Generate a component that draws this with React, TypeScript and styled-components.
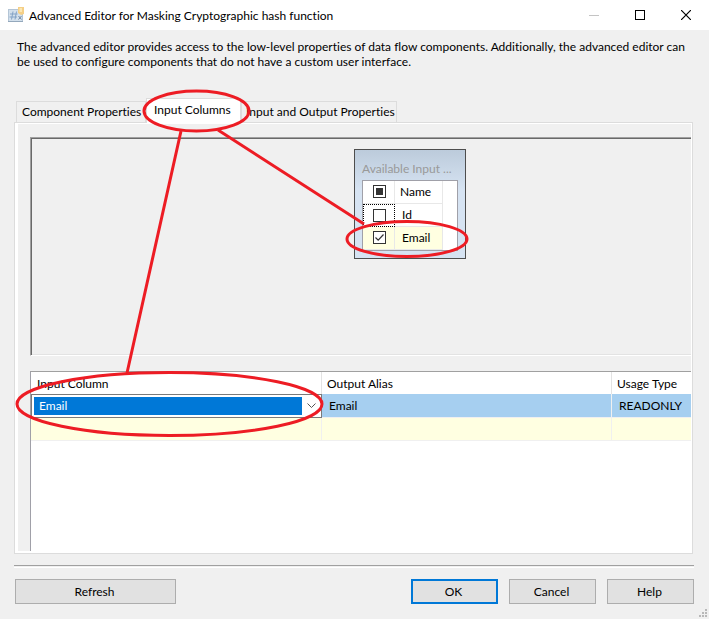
import React from "react";
import styled, { createGlobalStyle, css } from "styled-components";

const Global = createGlobalStyle`
  *, *::before, *::after { box-sizing: border-box; }
  html, body { margin: 0; padding: 0; }
  body, button, select, table {
    font-family: Lato, "Open Sans", sans-serif;
    font-size: 12px;
    line-height: 15px;
    font-variant-ligatures: none;
    color: #000;
  }
`;

const Dialog = styled.div`
  position: relative;
  display: flex;
  flex-direction: column;
  min-height: 100vh;
  background: #f0f0f0;
  overflow: hidden;
`;

const TitleBar = styled.header`
  display: flex;
  align-items: center;
  height: 30px;
  padding-left: 8px;
  background: #fff;
`;

const Title = styled.h1`
  flex: 1;
  margin: 0 0 0 5px;
  font-size: 12px;
  font-weight: 400;
  white-space: nowrap;
`;

const CaptionButton = styled.button`
  display: grid;
  place-items: center;
  width: 46px;
  height: 28px;
  padding: 0;
  border: 0;
  background: none;
`;

const Intro = styled.p`
  margin: 9px 0 0;
  padding: 0 14px 0 17px;
  min-height: 59px;
`;

const TabList = styled.div`
  display: flex;
  align-items: flex-end;
  height: 24px;
  padding-left: 16px;
`;

const Tab = styled.button<{ $active?: boolean }>`
  height: 21px;
  padding: 0 0 1px 5px;
  width: ${(p) => (p.$active ? "95px" : "130px")};
  border: 1px solid #dcdcdc;
  border-bottom: 0;
  background: #f0f0f0;
  white-space: nowrap;
  text-align: left;
  &:last-child { width: 156px; padding-left: 4px; }
  ${(p) =>
    p.$active &&
    css`
      z-index: 1;
      height: 25px;
      margin-bottom: -1px;
      padding: 0 0 3px 7px;
      background: #fff;
    `}
`;

const TabPanel = styled.section`
  flex: 1;
  display: flex;
  flex-direction: column;
  gap: 15px;
  margin: 0 16px 0 14px;
  padding: 14px 0 0 12px;
  border: 1px solid #dcdcdc;
  box-shadow: inset 3px 0 #fff, inset -1px 0 #fff, inset 0 1px #fff, inset 0 -2px #fff;
`;

const Canvas = styled.div`
  position: relative;
  height: 219px;
  margin: 0 1px 0 3px;
  border-top: 1px solid #a0a0a0;
  border-left: 1px solid #a0a0a0;
  border-bottom: 1px solid #fff;
  box-shadow: inset 1px 1px #696969, inset 0 -1px #e3e3e3;
`;

const InputWindow = styled.div`
  position: absolute;
  top: 11px;
  left: 323px;
  width: 112px;
  height: 110px;
  padding: 11px 7px 7px;
  border: 1px solid #4d4d4d;
  background: linear-gradient(#bccbdb, #d6e3f2 40px);
`;

const InputTitle = styled.div`
  height: 19px;
  color: #999;
  white-space: nowrap;
`;

const ColumnList = styled.table`
  width: 96px;
  border: 1px solid #a0a0a8;
  border-collapse: separate;
  border-spacing: 0;
  background: #fff;
  table-layout: fixed;
`;

const ListRow = styled.tr<{ $marked?: boolean }>`
  height: 23px;
  background: linear-gradient(to right, ${(p) => (p.$marked ? "#ffffe1" : "#fff")} 80px, #fff 80px);
`;

const CheckCell = styled.td<{ $focused?: boolean }>`
  width: 32px;
  padding: 0 0 1px 1px;
  text-align: center;
  border-right: 1px solid #e8e8e8;
  border-bottom: 1px solid #e8e8e8;
  ${(p) => p.$focused && css`padding: 0; border: 1px dotted #000;`}
`;

const NameCell = styled.td<{ $header?: boolean }>`
  width: 48px;
  padding: 0 0 2px ${(p) => (p.$header ? "5px" : "7px")};
  text-align: left;
  border-right: 1px solid #e8e8e8;
  border-bottom: 1px solid #e8e8e8;
`;

const Check = styled.input`
  appearance: none;
  display: block;
  width: 13px;
  height: 13px;
  margin: 0 auto;
  border: 1px solid #333;
  background: #fff center / 11px 11px no-repeat;
  &:indeterminate { background: linear-gradient(#333, #333) center / 7px 7px no-repeat #fff; }
  &:checked {
    background-image: url("data:image/svg+xml,%3Csvg xmlns='http://www.w3.org/2000/svg' viewBox='0 0 11 11'%3E%3Cpath d='M1.5 5.5l2.7 2.7 5.3-5.7' fill='none' stroke='%23333' stroke-width='1.2'/%3E%3C/svg%3E");
  }
`;

const GridArea = styled.div`
  flex: 1;
  margin: 0 1px 2px 3px;
  border-top: 1px solid #a0a0a0;
  border-left: 1px solid #a0a0a8;
  background: #fff;
`;

const MappingTable = styled.table`
  width: 100%;
  border-collapse: separate;
  border-spacing: 0;
  table-layout: fixed;
`;

const MapHead = styled.th<{ $width?: number }>`
  width: ${(p) => (p.$width ? p.$width + "px" : "auto")};
  height: 22px;
  padding: 0 0 0 5px;
  text-align: left;
  font-weight: 400;
  border-right: 1px solid #e3e3e3;
  &:first-child { padding-left: 6px; }
  &:last-child { border-right: 0; }
`;

const MapCell = styled.td<{ $selected?: boolean; $editor?: boolean }>`
  height: 23px;
  padding: ${(p) => (p.$editor ? "0" : "0 0 0 7px")};
  background: ${(p) => (p.$selected ? "#a6cff0" : "#ffffe1")};
  border-right: 1px solid #f0f0f0;
  border-bottom: 1px solid #f0f0f0;
  &:last-child { border-right: 0; }
`;

const Combo = styled.div`
  display: grid;
  grid-template-columns: 1fr 19px;
  align-items: center;
  height: 24px;
  margin: 0 -1px -1px 0;
  padding-left: 2px;
  border: 1px solid #7a7a7a;
  background: #fff;
  & > * { grid-row: 1; }
  & > svg { grid-column: 2; justify-self: center; pointer-events: none; }
`;

const ComboSelect = styled.select`
  appearance: none;
  grid-column: 1;
  width: 100%;
  height: 18px;
  padding: 0 0 1px 5px;
  border: 0;
  border-radius: 0;
  background: #0078d7;
  color: #fff;
`;

const Rule = styled.hr`
  width: auto;
  height: 3px;
  margin: 11px 15px 0 14px;
  border: 0;
  border-top: 1px solid #a0a0a0;
  border-bottom: 1px solid #fff;
`;

const Footer = styled.footer`
  display: flex;
  gap: 11px;
  padding: 11px 15px 15px;
`;

const Spacer = styled.div`
  flex: 1;
`;

const PushButton = styled.button<{ $primary?: boolean; $wide?: boolean }>`
  width: ${(p) => (p.$wide ? "161px" : "87px")};
  height: 25px;
  padding: 0 2px 0 0;
  border: ${(p) => (p.$primary ? "2px solid #0078d7" : "1px solid #adadad")};
  background: #e1e1e1;
`;

const Grip = styled.svg`
  position: absolute;
  right: 1px;
  bottom: 1px;
`;

const Markup = styled.svg`
  position: absolute;
  top: 0;
  left: 0;
  z-index: 2;
  pointer-events: none;
`;

const setMixed = (el: HTMLInputElement | null) => {
  if (el) el.indeterminate = true;
};

function AppIcon() {
  return (
    <svg width="16" height="16" viewBox="0 0 16 16" aria-hidden="true">
      <rect x="0.5" y="2.5" width="14" height="12" fill="#d3e0ec" stroke="#b4c5d6" />
      <path d="M0 14.5h15" stroke="#94a8bc" />
      <path d="M5 4.5l-1.5 8M8.5 4.5l-1.5 8M2 7h7.5M1.5 10h7.5" stroke="#84a3c6" fill="none" />
      <path d="M10.5 9l3 3.5M13.5 9l-3 3.5" stroke="#7189a6" fill="none" />
      <path d="M10 0h6v7l-3 1-3-2z" fill="#f5cf86" />
      <path d="M11.5 1h2.5v4h-2.5z" fill="#fbe7b4" />
    </svg>
  );
}

export default function App() {
  return (
    <>
      <Global />
      <Dialog>
        <TitleBar>
          <AppIcon />
          <Title>Advanced Editor for Masking Cryptographic hash function</Title>
          <CaptionButton aria-label="Minimize" disabled>
            <svg width="10" height="10"><path d="M0 5.5h10" stroke="#c4c4c4" /></svg>
          </CaptionButton>
          <CaptionButton aria-label="Maximize">
            <svg width="10" height="10"><rect x="0.5" y="0.5" width="9" height="9" fill="none" stroke="#000" /></svg>
          </CaptionButton>
          <CaptionButton aria-label="Close">
            <svg width="10" height="10"><path d="M0 0l10 10M10 0L0 10" stroke="#000" strokeWidth="1.2" /></svg>
          </CaptionButton>
        </TitleBar>

        <Intro>
          The advanced editor provides access to the low-level properties of data flow components. Additionally, the
          advanced editor can be used to configure components that do not have a custom user interface.
        </Intro>

        <TabList role="tablist">
          <Tab role="tab" aria-selected={false}>Component Properties</Tab>
          <Tab role="tab" aria-selected $active>Input Columns</Tab>
          <Tab role="tab" aria-selected={false}>Input and Output Properties</Tab>
        </TabList>

        <TabPanel role="tabpanel" aria-label="Input Columns">
          <Canvas>
            <InputWindow>
              <InputTitle>Available Input ...</InputTitle>
              <ColumnList>
                <tbody>
                  <ListRow>
                    <CheckCell><Check type="checkbox" ref={setMixed} aria-label="All columns" /></CheckCell>
                    <NameCell $header>Name</NameCell>
                    <td />
                  </ListRow>
                  <ListRow>
                    <CheckCell $focused><Check type="checkbox" id="col-id" /></CheckCell>
                    <NameCell><label htmlFor="col-id">Id</label></NameCell>
                    <td />
                  </ListRow>
                  <ListRow $marked>
                    <CheckCell><Check type="checkbox" id="col-email" defaultChecked /></CheckCell>
                    <NameCell><label htmlFor="col-email">Email</label></NameCell>
                    <td />
                  </ListRow>
                </tbody>
              </ColumnList>
            </InputWindow>
          </Canvas>

          <GridArea>
            <MappingTable>
              <thead>
                <tr>
                  <MapHead $width={291}>Input Column</MapHead>
                  <MapHead $width={290}>Output Alias</MapHead>
                  <MapHead>Usage Type</MapHead>
                </tr>
              </thead>
              <tbody>
                <tr>
                  <MapCell $selected $editor>
                    <Combo>
                      <ComboSelect aria-label="Input Column" defaultValue="Email">
                        <option>Email</option>
                        <option>Id</option>
                      </ComboSelect>
                      <svg width="9" height="6"><path d="M0.5 0.5l4 4 4-4" fill="none" stroke="#555" /></svg>
                    </Combo>
                  </MapCell>
                  <MapCell $selected>Email</MapCell>
                  <MapCell $selected>READONLY</MapCell>
                </tr>
                <tr>
                  <MapCell />
                  <MapCell />
                  <MapCell />
                </tr>
              </tbody>
            </MappingTable>
          </GridArea>
        </TabPanel>

        <Rule />
        <Footer>
          <PushButton $wide>Refresh</PushButton>
          <Spacer />
          <PushButton $primary>OK</PushButton>
          <PushButton>Cancel</PushButton>
          <PushButton>Help</PushButton>
        </Footer>

        <Grip width="9" height="9" fill="#b8b8b8" aria-hidden="true">
          <path d="M6 0h2v2h-2zM3 3h2v2h-2zM6 3h2v2h-2zM0 6h2v2h-2zM3 6h2v2h-2zM6 6h2v2h-2z" />
        </Grip>

        <Markup width="709" height="619" fill="none" stroke="#ed1c24" strokeWidth="3" aria-hidden="true">
          <ellipse cx="196.5" cy="111" rx="52.5" ry="20" />
          <path d="M181 131L127 373M218 130L364 224" />
          <ellipse cx="407" cy="239" rx="60" ry="17.5" />
          <ellipse cx="169.5" cy="404" rx="152.5" ry="31.5" />
        </Markup>
      </Dialog>
    </>
  );
}
